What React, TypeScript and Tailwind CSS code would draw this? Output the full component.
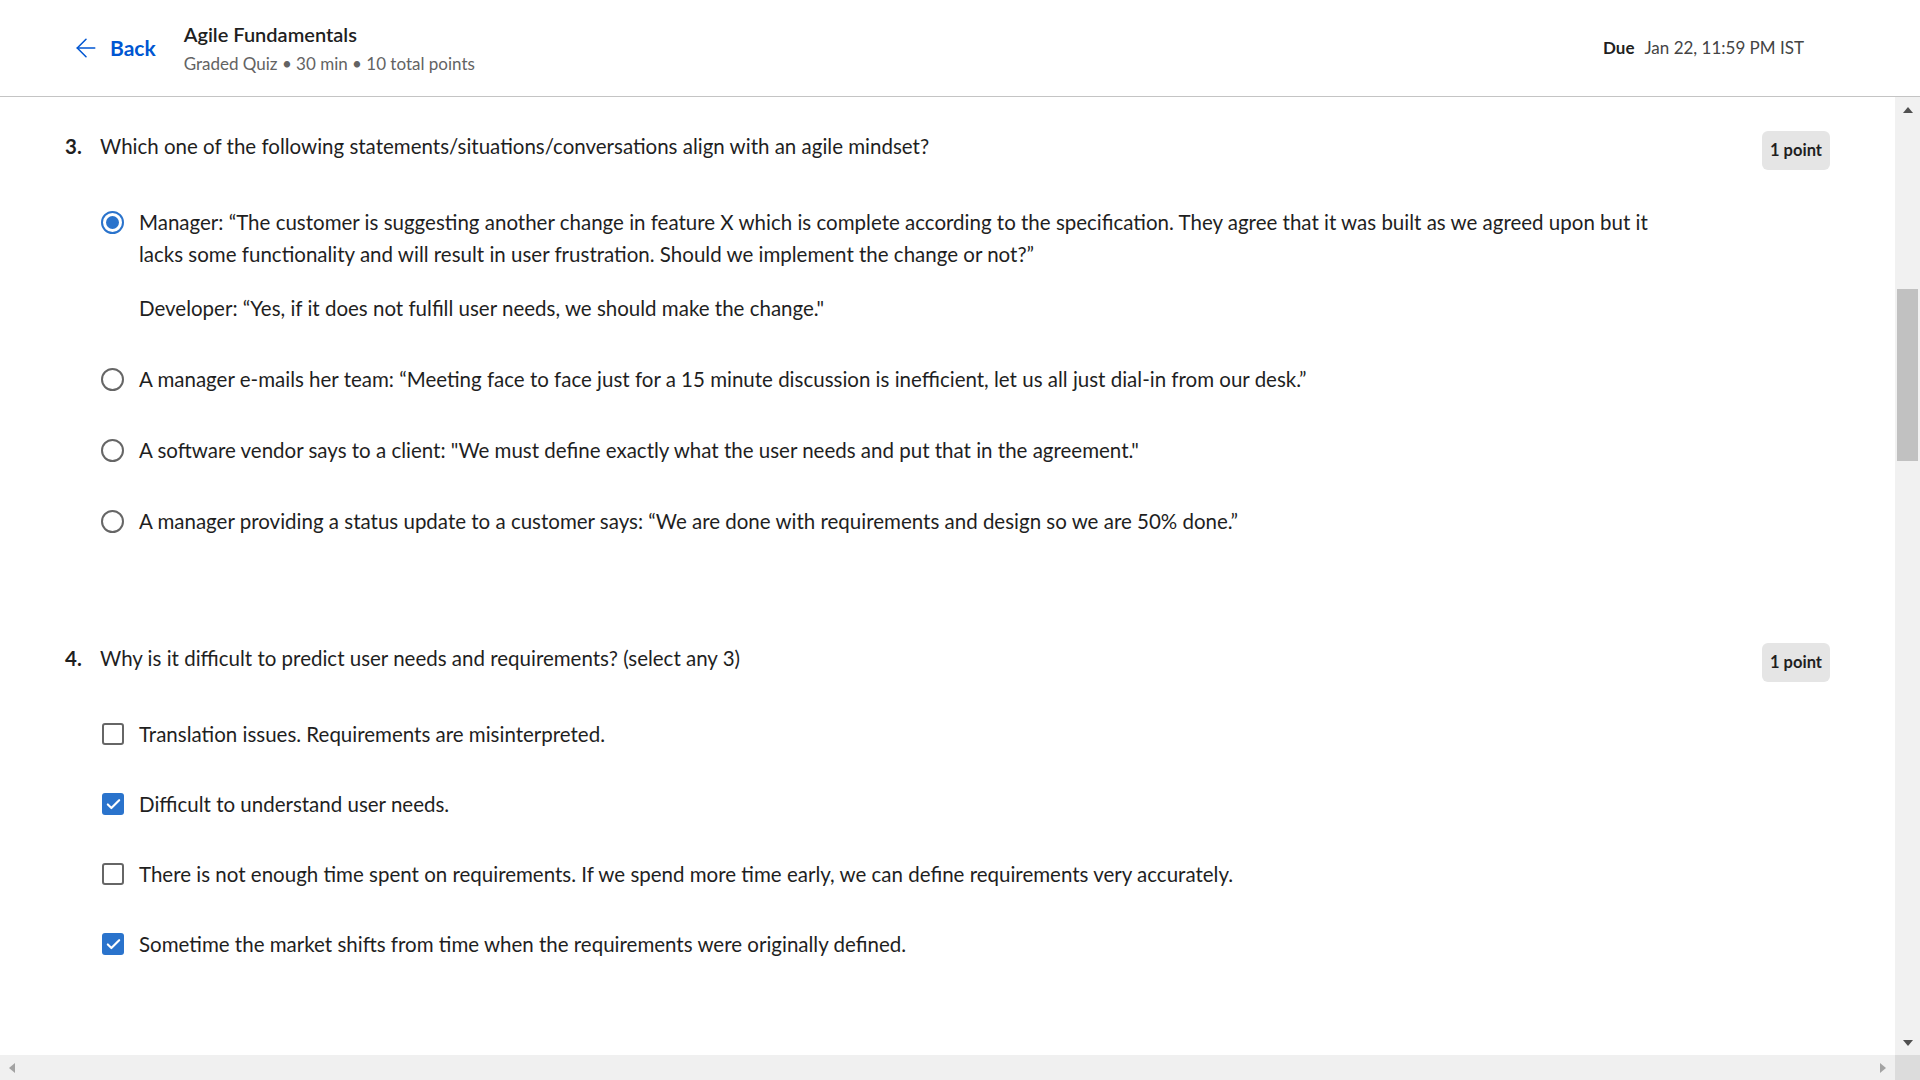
import React, { useState } from 'react';
import { ArrowLeft, Check } from 'lucide-react';

const q3Options = [
  {
    id: 'a',
    text: 'Manager: “The customer is suggesting another change in feature X which is complete according to the specification. They agree that it was built as we agreed upon but it lacks some functionality and will result in user frustration. Should we implement the change or not?”',
    extra: 'Developer: “Yes, if it does not fulfill user needs, we should make the change."',
  },
  { id: 'b', text: 'A manager e-mails her team: “Meeting face to face just for a 15 minute discussion is inefficient, let us all just dial-in from our desk.”' },
  { id: 'c', text: 'A software vendor says to a client: "We must define exactly what the user needs and put that in the agreement."' },
  { id: 'd', text: 'A manager providing a status update to a customer says: “We are done with requirements and design so we are 50% done.”' },
];

const q4Options = [
  { id: 'a', text: 'Translation issues. Requirements are misinterpreted.' },
  { id: 'b', text: 'Difficult to understand user needs.' },
  { id: 'c', text: 'There is not enough time spent on requirements. If we spend more time early, we can define requirements very accurately.' },
  { id: 'd', text: 'Sometime the market shifts from time when the requirements were originally defined.' },
];

const PointBadge = () => (
  <div className="mt-[1px] flex h-[39px] w-[68px] shrink-0 items-center justify-center rounded-md bg-[#e5e5e5] text-[16.5px] font-bold leading-none text-[#1f1f1f]">
    1 point
  </div>
);

const Radio = ({ checked }: { checked: boolean }) => (
  <div className={`mt-[5px] flex h-[23px] w-[23px] shrink-0 items-center justify-center rounded-full border-2 ${checked ? 'border-[#2a73cc]' : 'border-[#666666]'}`}>
    {checked && <div className="h-[13px] w-[13px] rounded-full bg-[#2a73cc]" />}
  </div>
);

const Checkbox = ({ checked }: { checked: boolean }) =>
  checked ? (
    <div className="mt-[5px] flex h-[22px] w-[22px] shrink-0 items-center justify-center rounded-[3px] bg-[#2a73cc] text-white">
      <Check size={17} strokeWidth={3} />
    </div>
  ) : (
    <div className="mt-[5px] h-[22px] w-[22px] shrink-0 rounded-[3px] border-2 border-[#666666]" />
  );

export default function App() {
  const [choice, setChoice] = useState('a');
  const [picked, setPicked] = useState<Record<string, boolean>>({ b: true, d: true });

  return (
    <div className="flex h-screen w-screen flex-col overflow-hidden bg-white font-['Source_Sans_Pro','Lato',sans-serif] text-[#1f1f1f]">
      {/* header */}
      <div className="flex h-[97px] shrink-0 items-center border-b border-[#c4c4c4] pl-[71px] pr-[116px]">
        <button className="flex items-center gap-[9px] text-[#0056d2]">
          <ArrowLeft size={30} strokeWidth={1.25} />
          <span className="text-[21px] font-bold">Back</span>
        </button>
        <div className="ml-[28px] flex flex-col">
          <span className="text-[20px] font-semibold leading-[26px]">Agile Fundamentals</span>
          <span className="mt-[6px] text-[17px] leading-[22px] text-[#636363]">Graded Quiz • 30 min • 10 total points</span>
        </div>
        <div className="ml-auto flex items-center gap-[10px] text-[17px]">
          <span className="font-bold">Due</span>
          <span className="text-[#444444]">Jan 22, 11:59 PM IST</span>
        </div>
      </div>

      <div className="flex min-h-0 flex-1">
        <div className="min-w-0 flex-1 overflow-hidden pl-[65px] pr-[65px] pt-[33px] text-[20.5px] leading-[32px]">
          {/* question 3 */}
          <div className="flex items-start">
            <span className="w-[35px] shrink-0 font-bold">3.</span>
            <p className="flex-1">Which one of the following statements/situations/conversations align with an agile mindset?</p>
            <PointBadge />
          </div>
          <div className="mt-[36px] flex flex-col gap-[39px] pl-[36px]">
            {q3Options.map(o => (
              <label key={o.id} className="flex cursor-pointer items-start gap-[15px]" onClick={() => setChoice(o.id)}>
                <Radio checked={choice === o.id} />
                <div className="max-w-[1510px]">
                  <p>{o.text}</p>
                  {o.extra && <p className="mt-[22px]">{o.extra}</p>}
                </div>
              </label>
            ))}
          </div>

          {/* question 4 */}
          <div className="mt-[105px] flex items-start">
            <span className="w-[35px] shrink-0 font-bold">4.</span>
            <p className="flex-1">Why is it difficult to predict user needs and requirements? (select any 3)</p>
            <PointBadge />
          </div>
          <div className="mt-[36px] flex flex-col gap-[38px] pl-[37px]">
            {q4Options.map(o => (
              <label
                key={o.id}
                className="flex cursor-pointer items-start gap-[15px]"
                onClick={() => setPicked(p => ({ ...p, [o.id]: !p[o.id] }))}
              >
                <Checkbox checked={!!picked[o.id]} />
                <p>{o.text}</p>
              </label>
            ))}
          </div>
        </div>

        {/* vertical scrollbar */}
        <div className="flex w-[25px] shrink-0 flex-col items-center bg-[#f1f1f1]">
          <div className="flex h-[25px] items-center justify-center">
            <div className="h-0 w-0 border-x-[5px] border-b-[6px] border-x-transparent border-b-[#505050]" />
          </div>
          <div className="mt-[167px] h-[172px] w-[21px] bg-[#c1c1c1]" />
          <div className="flex-1" />
          <div className="flex h-[25px] items-center justify-center">
            <div className="h-0 w-0 border-x-[5px] border-t-[6px] border-x-transparent border-t-[#505050]" />
          </div>
        </div>
      </div>

      {/* horizontal scrollbar */}
      <div className="flex h-[25px] shrink-0">
        <div className="flex flex-1 items-center justify-between bg-[#f0f0f0] px-[9px]">
          <div className="h-0 w-0 border-y-[5px] border-r-[6px] border-y-transparent border-r-[#a3a3a3]" />
          <div className="h-0 w-0 border-y-[5px] border-l-[6px] border-y-transparent border-l-[#a3a3a3]" />
        </div>
        <div className="w-[25px] bg-[#dcdcdc]" />
      </div>
    </div>
  );
}
